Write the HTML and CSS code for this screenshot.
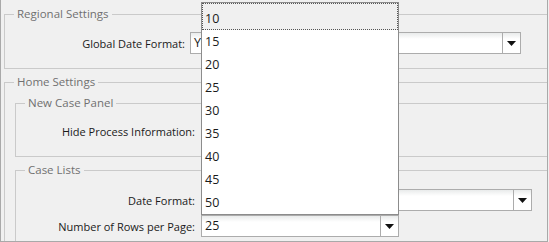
FILE: index.html
```html
<!DOCTYPE html>
<html lang="en">
<head>
    <meta charset="UTF-8">
    <title>Settings</title>
    <link rel="stylesheet" href="styles.css">
</head>
<body>
    <div class="window">
        <fieldset class="group">
            <legend>Regional Settings</legend>
            <div class="row">
                <label class="label top-label">Global Date Format:</label>
                <div class="select long">
                    <span class="value">YYYY-MM-DD</span>
                    <span class="arrow"><svg width="9" height="5" viewBox="0 0 9 5"><path d="M0 0H9L4.5 5Z" fill="#111"/></svg></span>
                </div>
            </div>
        </fieldset>

        <fieldset class="group home">
            <legend>Home Settings</legend>

            <fieldset class="group sub">
                <legend>New Case Panel</legend>
                <div class="row">
                    <label class="label">Hide Process Information:</label>
                    <input type="checkbox" class="check">
                </div>
            </fieldset>

            <fieldset class="group sub">
                <legend>Case Lists</legend>
                <div class="row">
                    <label class="label">Date Format:</label>
                    <div class="select long">
                        <span class="value">YYYY-MM-DD</span>
                        <span class="arrow"><svg width="9" height="5" viewBox="0 0 9 5"><path d="M0 0H9L4.5 5Z" fill="#111"/></svg></span>
                    </div>
                </div>
                <div class="row">
                    <label class="label">Number of Rows per Page:</label>
                    <div class="select short">
                        <span class="value">25</span>
                        <span class="arrow"><svg width="9" height="5" viewBox="0 0 9 5"><path d="M0 0H9L4.5 5Z" fill="#111"/></svg></span>
                    </div>
                </div>
            </fieldset>
        </fieldset>

        <ul class="dropdown">
            <li class="active">10</li>
            <li>15</li>
            <li>20</li>
            <li>25</li>
            <li>30</li>
            <li>35</li>
            <li>40</li>
            <li>45</li>
            <li>50</li>
        </ul>
    </div>
</body>
</html>
```

FILE: styles.css
```css
body {
    margin: 0;
    background-color: #f0f0f0;
    font-family: "Open Sans", "DejaVu Sans", sans-serif;
    font-size: 11px;
    color: #1a1a1a;
}

.window {
    position: relative;
    width: 548px;
    height: 242px;
    box-sizing: border-box;
    border-left: 1px solid #a9a9a9;
    border-right: 1px solid #a9a9a9;
    border-bottom: 1px solid #a9a9a9;
    overflow: hidden;
}

.group {
    margin: 5px -20px 0 3px;
    padding: 10px 0 14px 0;
    border: 1px solid #cacaca;
    min-inline-size: 0;
}

.window > .group:first-child {
    margin-top: 6px;
}

.home {
    padding: 0;
}

.group legend {
    margin-left: 9px;
    padding: 0 3px;
    line-height: 16px;
    font-size: 11.5px;
    color: #707070;
}

.sub {
    margin-left: 10px;
    padding: 9px 0 14px 0;
}

.sub + .sub {
    padding-top: 11px;
}

.row {
    display: flex;
    align-items: center;
    height: 22px;
}

.row + .row {
    margin-top: 4px;
}

.label {
    width: 179px;
    margin-right: 6px;
    text-align: right;
    flex-shrink: 0;
}

.top-label {
    width: 180px;
    margin-right: 5px;
}

.check {
    margin: 0;
    width: 13px;
    height: 13px;
}

.select {
    display: flex;
    height: 22px;
    box-sizing: border-box;
    border: 1px solid #acacac;
    background: linear-gradient(#e9ebeb, #ffffff 6px);
}

.long {
    width: 331px;
}

.short {
    width: 198px;
}

.value {
    flex: 1;
    padding-left: 3px;
    line-height: 20px;
    font-size: 12.5px;
    white-space: nowrap;
    overflow: hidden;
}

.arrow {
    width: 17px;
    border-left: 1px solid #acacac;
    display: flex;
    align-items: center;
    justify-content: center;
}

.dropdown {
    position: absolute;
    left: 200px;
    top: 2px;
    width: 198px;
    margin: 0;
    padding: 0;
    list-style: none;
    box-sizing: border-box;
    background-color: #ffffff;
    border: 1px solid #8c8c8c;
}

.dropdown li {
    padding-left: 3px;
    line-height: 23px;
    font-size: 12.5px;
}

.dropdown .active {
    padding-top: 4px;
    background-color: #f0f0f0;
    outline: 1px dotted #555;
    outline-offset: -1px;
}
```
